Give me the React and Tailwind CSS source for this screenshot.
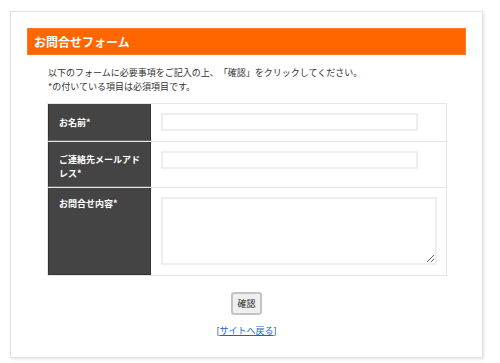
const rows = [
  { label: 'お名前*', h: 'h-[38px]', pt: 'pt-[12px]', field: 'input' },
  { label: 'ご連絡先メールアドレス*', h: 'h-[46px]', pt: 'pt-[11px]', field: 'input' },
  { label: 'お問合せ内容*', h: 'h-[87px]', pt: 'pt-[9px]', field: 'textarea' },
];

export default function App() {
  return (
    <div className="w-[500px] h-[363px] bg-white pt-[11px] pl-[10px] font-['Noto_Sans_CJK_JP',sans-serif] [text-spacing-trim:space-all]">
      <div className="w-[473px] h-[347px] bg-white border border-[#e2e2e2] shadow-[1px_1px_3px_rgba(0,0,0,0.12)] px-[16px] pt-[16px]">
        <h1 className="h-[27px] bg-[#ff6600] border border-[#ff7a26] text-white font-bold text-[12px] leading-[25px] pl-[6px]">
          お問合せフォーム
        </h1>

        <div className="pl-[21px] mt-[11px] text-[9px] leading-[14px] text-[#333]">
          <p>以下のフォームに必要事項をご記入の上、「確認」をクリックしてください。</p>
          <p>*の付いている項目は必須項目です。</p>
        </div>

        <div className="ml-[20px] mt-[9px] w-[400px] border border-[#e6e6e6]">
          {rows.map((r, i) => (
            <div key={i} className={`flex ${r.h} ${i < rows.length - 1 ? 'border-b border-[#e6e6e6]' : ''}`}>
              <div
                className={`w-[103px] shrink-0 bg-[#444] text-white font-bold text-[9px] leading-[14px] pl-[10px] pr-[8px] ${r.pt} border-x border-[#333] ${i < rows.length - 1 ? 'border-b border-b-[#6a6a6a]' : 'border-b border-b-[#333]'}`}
              >
                {r.label}
              </div>
              <div className="flex-1 pl-[10px] pt-[9px]">
                {r.field === 'input' ? (
                  <input
                    type="text"
                    className="block w-[257px] h-[18px] border-2 border-[#eeeeee] bg-white outline-none"
                  />
                ) : (
                  <textarea className="block w-[276px] h-[68px] border-2 border-[#eeeeee] bg-white outline-none" />
                )}
              </div>
            </div>
          ))}
        </div>

        <div className="flex justify-center mt-[16px]">
          <button className="w-[31px] h-[23px] bg-[#efefef] border-2 border-[#c4c4c4] rounded-[3px] text-[9px] text-[#222] leading-none">
            確認
          </button>
        </div>

        <p className="text-center mt-[9px] text-[9px] leading-[14px] text-[#333]">
          [<a href="#" className="text-[#1a5fd6] underline">サイトへ戻る</a>]
        </p>
      </div>
    </div>
  );
}
